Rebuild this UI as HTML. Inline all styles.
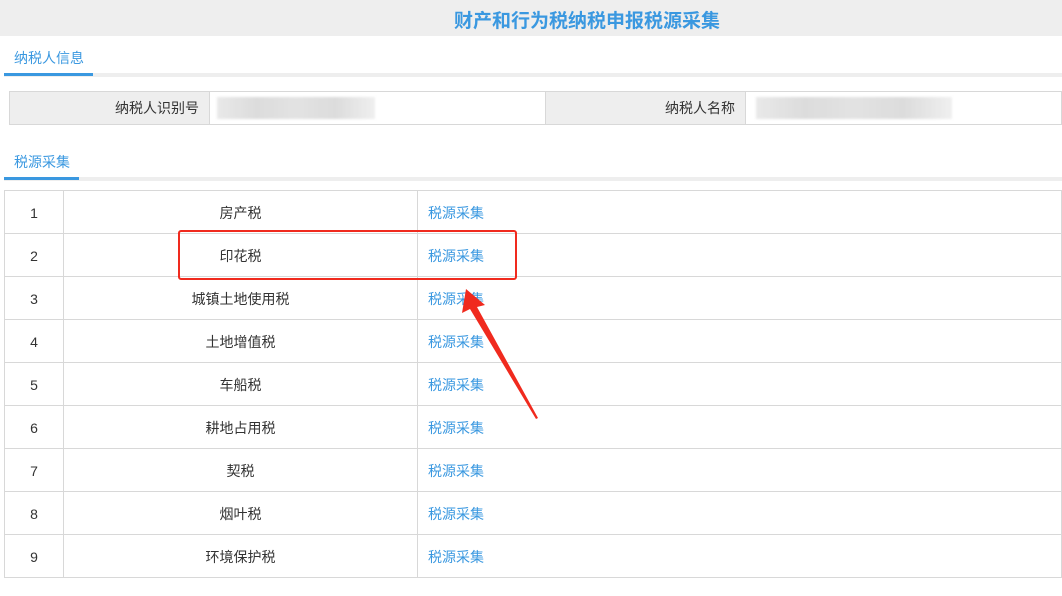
<!DOCTYPE html>
<html><head><meta charset="utf-8"><style>
*{margin:0;padding:0;box-sizing:border-box}
body{width:1062px;height:596px;background:#fff;font-family:"Liberation Sans","Noto Sans CJK SC",sans-serif;font-size:14px;color:#333;position:relative;overflow:hidden}
.hdr{position:absolute;left:0;top:0;width:1062px;height:36px;background:#eee}
.hdr div{position:absolute;left:454px;top:6px;font-size:19px;font-weight:bold;color:#3a98e0;letter-spacing:0}
.tab{position:absolute;left:4px;width:1058px;height:4px;background:#eee}
.tab b{position:absolute;left:0;top:0;height:3px;background:#3a98e0}
.tt{position:absolute;left:14px;color:#3a98e0;font-size:14px}
.info{position:absolute;left:9px;top:91px;width:1053px;height:34px;border:1px solid #d8d8d8;display:flex}
.info div{height:32px;line-height:32px}
.lb{background:#eee;text-align:right;padding-right:10px;border-right:1px solid #d8d8d8}
.blur{position:absolute;height:22px;background:linear-gradient(90deg,#e4e4e4,#d4d4d4,#dcdcdc,#d4d4d4,#ececec);opacity:.8;filter:blur(1px)}
table{position:absolute;left:4px;top:190px;width:1058px;border-collapse:collapse}
td{height:43px;border:1px solid #d8d8d8;text-align:center;padding-top:2px}
td:nth-child(1){width:59px}
td:nth-child(2){width:354px}
td:nth-child(3){text-align:left;padding-left:10px;color:#3a98e0}
</style></head><body>
<div class="hdr"><div>财产和行为税纳税申报税源采集</div></div>
<div class="tt" style="top:48px">纳税人信息</div>
<div class="tab" style="top:73px"><b style="width:89px"></b></div>
<div class="info">
<div class="lb" style="width:200px">纳税人识别号</div>
<div style="width:336px;border-right:1px solid #d8d8d8"></div>
<div class="lb" style="width:200px">纳税人名称</div>
<div style="flex:1"></div>
</div>
<div class="blur" style="left:217px;top:97px;width:158px"></div>
<div class="blur" style="left:756px;top:97px;width:196px"></div>
<div class="tt" style="top:152px">税源采集</div>
<div class="tab" style="top:177px"><b style="width:75px"></b></div>
<table>
<tr><td>1</td><td>房产税</td><td>税源采集</td></tr>
<tr><td>2</td><td>印花税</td><td>税源采集</td></tr>
<tr><td>3</td><td>城镇土地使用税</td><td>税源采集</td></tr>
<tr><td>4</td><td>土地增值税</td><td>税源采集</td></tr>
<tr><td>5</td><td>车船税</td><td>税源采集</td></tr>
<tr><td>6</td><td>耕地占用税</td><td>税源采集</td></tr>
<tr><td>7</td><td>契税</td><td>税源采集</td></tr>
<tr><td>8</td><td>烟叶税</td><td>税源采集</td></tr>
<tr><td>9</td><td>环境保护税</td><td>税源采集</td></tr>
</table>
<div style="position:absolute;left:178px;top:230px;width:339px;height:50px;border:2.5px solid #f02a1e;border-radius:3px"></div>
<svg style="position:absolute;left:0;top:0" width="1062" height="596"><polygon points="466,289 485,305 477,307 538,418 536,419 470,309 462,313" fill="#f02a1e"/></svg>
</body></html>
